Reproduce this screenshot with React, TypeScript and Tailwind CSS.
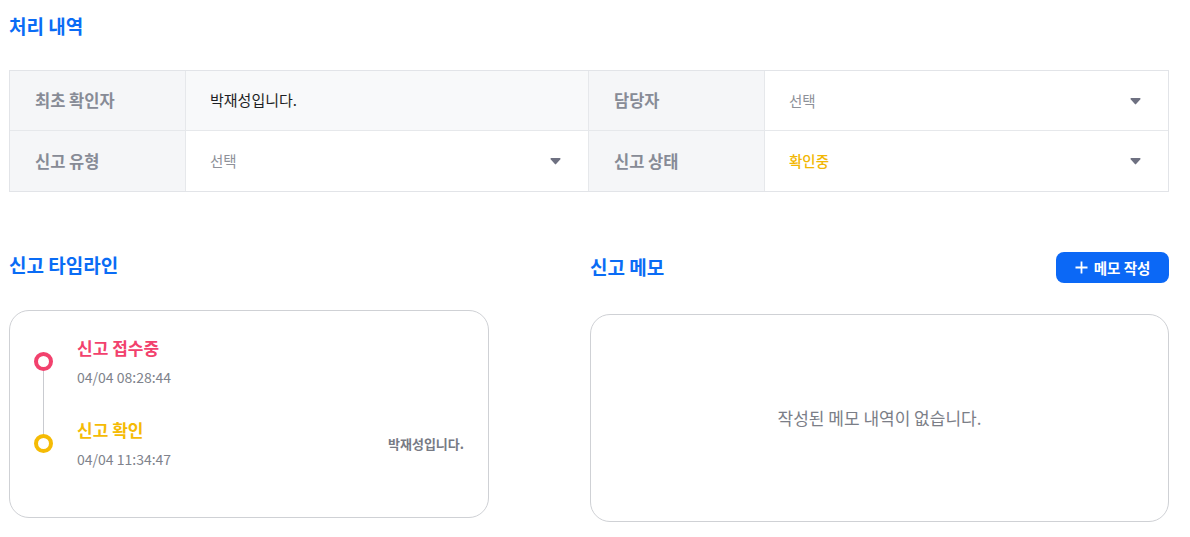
import type { ReactNode } from 'react';

const font = { fontFamily: '"Noto Sans CJK KR", "Noto Sans", sans-serif' };

function Caret() {
  return (
    <svg width="11" height="8" viewBox="0 0 11 8" className="shrink-0">
      <path d="M1.2 1h8.6a.8.8 0 0 1 .62 1.3L6.1 7.1a.8.8 0 0 1-1.2 0L.58 2.3A.8.8 0 0 1 1.2 1z" fill="#6e7081" />
    </svg>
  );
}

function Label({ children }: { children: ReactNode }) {
  return (
    <div className="flex w-[176px] shrink-0 items-center border-r border-[#e6e8eb] bg-[#f5f6f8] pl-[25px] text-[16.5px] font-bold text-[#878b96]">
      {children}
    </div>
  );
}

function SelectCell({ value, tone = 'placeholder' }: { value: string; tone?: 'placeholder' | 'warn' }) {
  return (
    <div className="flex flex-1 items-center justify-between pl-[24px] pr-[27px]">
      <span
        className={
          tone === 'warn' ? 'text-[14.5px] font-medium text-[#f2b705]' : 'text-[14.5px] text-[#8e9199]'
        }
      >
        {value}
      </span>
      <Caret />
    </div>
  );
}

function TimelineItem({
  title,
  time,
  color,
  who,
  last,
}: {
  title: string;
  time: string;
  color: string;
  who?: string;
  last?: boolean;
}) {
  return (
    <div className="relative flex items-start">
      <div className="relative flex w-[67px] shrink-0 justify-center pt-[16px]">
        <div className="h-[19px] w-[19px] rounded-full border-[4px] bg-white" style={{ borderColor: color }} />
        {!last ? <div className="absolute left-[33px] top-[35px] h-[63px] w-px bg-[#c9cbd0]" /> : null}
      </div>
      <div className="flex flex-1 items-center justify-between pr-[24px]">
        <div>
          <div className="text-[17px] font-bold leading-[24px]" style={{ color }}>
            {title}
          </div>
          <div className="mt-[6px] text-[14px] leading-[22px] text-[#80838c]">{time}</div>
        </div>
        {who ? <div className="text-[13px] font-bold text-[#777a84]">{who}</div> : null}
      </div>
    </div>
  );
}

export default function App() {
  return (
    <div className="min-h-[537px] w-[1190px] bg-white px-[9px] pt-[14px]" style={font}>
      <h2 className="text-[19px] font-bold leading-[24px] text-[#0a6cf5]">처리 내역</h2>

      <div className="mt-[32px] w-[1160px] border border-[#e2e4e8]">
        <div className="flex h-[60px] border-b border-[#e6e8eb]">
          <Label>최초 확인자</Label>
          <div className="flex w-[403px] items-center border-r border-[#e6e8eb] bg-[#f8f9fa] pl-[24px] text-[15px] text-[#1d1f24]">
            박재성입니다.
          </div>
          <Label>담당자</Label>
          <SelectCell value="선택" />
        </div>
        <div className="flex h-[60px]">
          <Label>신고 유형</Label>
          <div className="flex w-[403px] border-r border-[#e6e8eb]">
            <SelectCell value="선택" />
          </div>
          <Label>신고 상태</Label>
          <SelectCell value="확인중" tone="warn" />
        </div>
      </div>

      <div className="mt-[60px] grid w-[1160px] grid-cols-2">
        <section>
          <div className="flex h-[31px] items-center">
            <h2 className="-mt-[5px] text-[19px] font-bold text-[#0a6cf5]">신고 타임라인</h2>
          </div>
          <div className="mt-[27px] h-[208px] w-[480px] rounded-[20px] border border-[#cfd1d5] pt-[25px]">
            <TimelineItem title="신고 접수중" time="04/04 08:28:44" color="#f2416d" />
            <div className="h-[30px]" />
            <TimelineItem title="신고 확인" time="04/04 11:34:47" color="#f5bb05" who="박재성입니다." last />
          </div>
        </section>

        <section className="pl-[1px]">
          <div className="flex h-[31px] items-center justify-between">
            <h2 className="text-[19px] font-bold text-[#0a6cf5]">신고 메모</h2>
            <button className="flex h-[31px] w-[113px] items-center justify-center gap-[6px] rounded-[8px] bg-[#0b68f6] text-[14.5px] font-bold text-white">
              <svg width="13" height="13" viewBox="0 0 13 13">
                <path d="M6.5 0.5v12M0.5 6.5h12" stroke="white" strokeWidth="1.8" />
              </svg>
              메모 작성
            </button>
          </div>
          <div className="mt-[31px] flex h-[208px] items-center justify-center rounded-[20px] border border-[#cfd1d5]">
            <span className="text-[17px] text-[#7b7e87]">작성된 메모 내역이 없습니다.</span>
          </div>
        </section>
      </div>
    </div>
  );
}
